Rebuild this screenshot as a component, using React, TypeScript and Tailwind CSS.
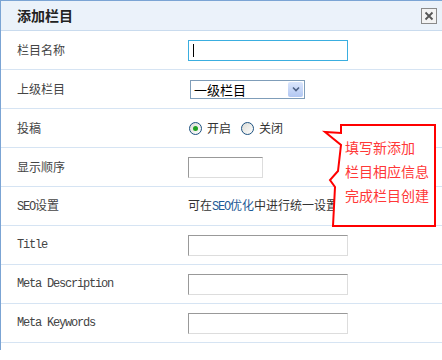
import React from 'react'

const cjk = "font-['SimSun','Noto_Sans_CJK_SC',sans-serif]"
const mono = "font-['Liberation_Mono','Noto_Sans_CJK_SC',monospace]"

const Row = ({ children, label, en }: { children?: React.ReactNode; label: React.ReactNode; en?: boolean }) => (
  <div className="flex h-[39px] items-center border-b border-[#d6e4f3]">
    <div
      className={
        en
          ? `w-[187px] shrink-0 pl-4 text-[12px] tracking-[-1.2px] text-[#444] ${mono}`
          : `w-[187px] shrink-0 pl-4 text-[12px] text-[#444] ${cjk}`
      }
    >
      {label}
    </div>
    <div className="flex items-center">{children}</div>
  </div>
)

const TextBox = ({ small, focus }: { small?: boolean; focus?: boolean }) => (
  <div
    className={
      focus
        ? 'flex h-[21px] w-[160px] items-center border border-[#3aaee0] bg-white pl-[4px]'
        : small
          ? 'h-[21px] w-[75px] border border-t-[#999] border-l-[#999] border-r-[#ddd] border-b-[#ddd] bg-white'
          : 'h-[21px] w-[160px] border border-t-[#999] border-l-[#999] border-r-[#ddd] border-b-[#ddd] bg-white'
    }
  >
    {focus ? <span className="h-[13px] w-px bg-black" /> : null}
  </div>
)

const Radio = ({ checked }: { checked?: boolean }) => (
  <span className="flex h-[13px] w-[13px] items-center justify-center rounded-full border border-[#1c5180] bg-gradient-to-br from-[#dcdcd6] to-white">
    {checked ? <span className="h-[5px] w-[5px] rounded-full bg-[#21a121]" /> : null}
  </span>
)

export default function App() {
  return (
    <div className="relative h-[360px] w-[442px] overflow-hidden bg-white">
      <div className="h-[350px] border-l border-t border-[#7ba4d4]">
        <div className="flex h-[30px] items-center justify-between border-b border-[#c9dbee] bg-[#ebf2fa] pl-4 pr-[5px]">
          <span className={`text-[14px] font-bold text-[#222] ${cjk}`}>添加栏目</span>
          <span className="flex h-[16px] w-[16px] items-center justify-center border border-[#8a8a8a] bg-[#f3f3f3]">
            <svg width="10" height="10" viewBox="0 0 10 10">
              <path d="M1.5 1.5 L8.5 8.5 M8.5 1.5 L1.5 8.5" stroke="#555" strokeWidth="1.8" />
            </svg>
          </span>
        </div>

        <Row label="栏目名称">
          <TextBox focus />
        </Row>
        <Row label="上级栏目">
          <div className="ml-[2px] flex h-[19px] w-[115px] items-center justify-between border border-[#7f9db9] bg-white">
            <span className={`pl-[3px] text-[13px] leading-none text-black ${cjk}`}>一级栏目</span>
            <span className="mr-px flex h-[15px] w-[15px] items-center justify-center rounded-[2px] bg-gradient-to-b from-[#dbe6fc] to-[#b2c7f2]">
              <svg width="8" height="6" viewBox="0 0 8 6">
                <path d="M1 1.5 L4 4.5 L7 1.5" stroke="#4d6185" strokeWidth="1.6" fill="none" />
              </svg>
            </span>
          </div>
        </Row>
        <Row label="投稿">
          <div className={`ml-[1px] flex items-center text-[12px] text-[#333] ${cjk}`}>
            <Radio checked />
            <span className="ml-[5px] mr-[10px]">开启</span>
            <Radio />
            <span className="ml-[5px]">关闭</span>
          </div>
        </Row>
        <Row label="显示顺序">
          <TextBox small />
        </Row>
        <Row
          label={
            <span>
              <span className={`text-[12px] tracking-[-1.2px] ${mono}`}>SEO</span>设置
            </span>
          }
        >
          <span className={`text-[12px] text-[#333] ${cjk}`}>
            可在
            <span className="text-[#1d5a96]">
              <span className={`text-[12px] tracking-[-1.2px] ${mono}`}>SEO</span>优化
            </span>
            中进行统一设置
          </span>
        </Row>
        <Row label="Title" en>
          <TextBox />
        </Row>
        <Row label="Meta Description" en>
          <TextBox />
        </Row>
        <Row label="Meta Keywords" en>
          <TextBox />
        </Row>
      </div>

      <svg className="absolute left-0 top-0" width="442" height="360" viewBox="0 0 442 360">
        <polygon
          points="341,125 435,125 435,226 333,226 335,187 330,180 338,171 341,145 325,132 341,133"
          fill="white"
          stroke="#ff0000"
          strokeWidth="2"
        />
      </svg>
      <div
        className={`absolute left-[345px] top-[137px] flex flex-col gap-[4px] text-[14px] leading-[20px] text-[#ff3838] ${cjk}`}
      >
        <span>填写新添加</span>
        <span>栏目相应信息</span>
        <span>完成栏目创建</span>
      </div>
    </div>
  )
}
